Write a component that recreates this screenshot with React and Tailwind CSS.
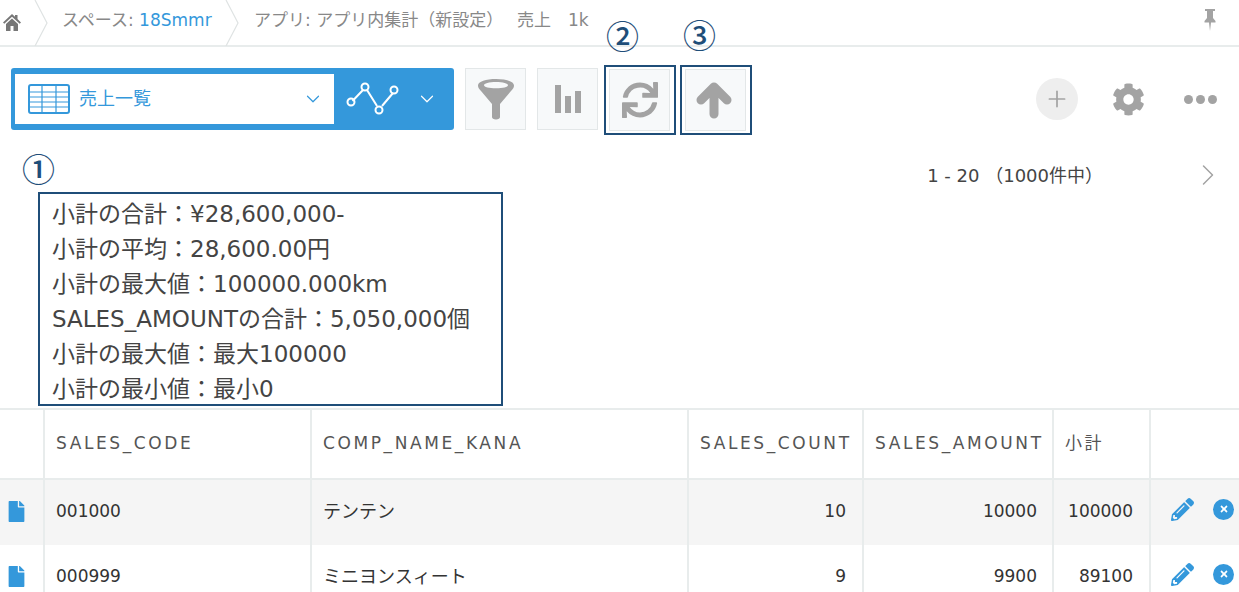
import React from 'react';
import { FaSync, FaCog, FaPencilAlt, FaFile, FaTimes } from 'react-icons/fa';
import { ChevronDown, ChevronRight, Plus } from 'lucide-react';

const SUMMARY_LINES = [
  '小計の合計：¥28,600,000-',
  '小計の平均：28,600.00円',
  '小計の最大値：100000.000km',
  'SALES_AMOUNTの合計：5,050,000個',
  '小計の最大値：最大100000',
  '小計の最小値：最小0',
];

const ROWS = [
  { code: '001000', name: 'テンテン', count: '10', amount: '10000', subtotal: '100000', shaded: true },
  { code: '000999', name: 'ミニヨンスィート', count: '9', amount: '9900', subtotal: '89100', shaded: false },
];

const GRID = 'grid grid-cols-[45px_267px_377px_175px_190px_97px_88px]';
const CELL = 'flex items-center border-r-2 border-[#e8ecec]';

function Crumb() {
  return (
    <svg width="14" height="46" viewBox="0 0 14 46" className="shrink-0 text-[#dfe3e3]" fill="none" stroke="currentColor" strokeWidth="1.2">
      <path d="M1 0 L13 23 L1 46" />
    </svg>
  );
}

function ToolButton({ children, className = '' }) {
  return (
    <div className={`flex h-[62px] w-[61px] items-center justify-center border border-[#e3e7e8] bg-[#f7f9fa] text-[#a3a3a3] ${className}`}>
      {children}
    </div>
  );
}

function Marked({ children, mark, markClass }) {
  return (
    <div className="relative flex h-[70px] w-[72px] items-center border-2 border-[#1f4e79] pl-[3px]">
      {children}
      <span className={`absolute font-['Noto_Sans_CJK_JP',sans-serif] text-[33px] font-medium leading-none text-[#1f4e79] ${markClass}`}>{mark}</span>
    </div>
  );
}

function DataRow({ row }) {
  return (
    <div className={`${GRID} h-[65px] text-[17px] text-[#333] ${row.shaded ? 'bg-[#f5f5f5]' : 'bg-white'}`}>
      <div className={`${CELL} pb-[2px] pl-[6px] text-[#3498db]`}>
        <FaFile size={21} />
      </div>
      <div className={`${CELL} pb-[2px] pl-[11px]`}>{row.code}</div>
      <div className={`${CELL} pb-[2px] pl-[11px] text-[18px]`}>{row.name}</div>
      <div className={`${CELL} justify-end pb-[2px] pr-[16px]`}>{row.count}</div>
      <div className={`${CELL} justify-end pb-[2px] pr-[15px]`}>{row.amount}</div>
      <div className={`${CELL} justify-end pb-[2px] pr-[16px]`}>{row.subtotal}</div>
      <div className="flex items-center gap-[19px] pb-[7px] pl-[20px] text-[#3498db]">
        <FaPencilAlt size={23} />
        <span className="flex h-[21px] w-[21px] items-center justify-center rounded-full bg-[#3498db] text-white">
          <FaTimes size={10} />
        </span>
      </div>
    </div>
  );
}

export default function App() {
  return (
    <div className="h-[592px] w-[1239px] overflow-hidden bg-white font-['DejaVu_Sans','Noto_Sans_CJK_JP',sans-serif] text-[#333]">
      <header className="flex h-[47px] items-center border-b-2 border-[#e8ecec] text-[17px] text-[#888]">
        <svg width="18" height="17" viewBox="0 0 18 17" fill="#777" className="ml-[3px] mr-[13px] mb-[1px] shrink-0">
          <path d="M9 0 L12 2.700 V1 H14.500 V5 L18 8.500 L16.700 9.800 L9 2.800 L1.300 9.800 L0 8.500 Z M3 10 L9 4.500 L15 10 V17 H10.500 V12 H7.500 V17 H3 Z" />
        </svg>
        <Crumb />
        <span className="mb-[4px] ml-[14px] w-[163px] whitespace-nowrap">
          スペース: <span className="text-[#3498db]">18Smmr</span>
        </span>
        <Crumb />
        <span className="mb-[4px] ml-[15px] w-[263px] whitespace-nowrap">アプリ: アプリ内集計（新設定）</span>
        <span className="mb-[4px] w-[51px]">売上</span>
        <span className="mb-[4px]">1k</span>
        <svg width="12" height="22" viewBox="0 0 12 22" fill="#a3a3a3" className="ml-auto mr-[23px] mb-[5px] shrink-0">
          <path d="M1 0 H11 V2 H9 V9 L11.500 12 V13.500 H7 L6 22 L5 13.500 H0.500 V12 L3 9 V2 H1 Z" />
        </svg>
      </header>

      <div className="flex h-[92px] items-start pl-[11px] pr-[22px] pt-[18px]">
        <div className="mt-[3px] flex h-[62px] w-[443px] items-center rounded-[3px] bg-[#3498db] pl-[4px]">
          <div className="flex h-[50px] w-[319px] items-center bg-white pl-[13px] pr-[10px] text-[18px] text-[#3498db]">
            <svg width="42" height="30" viewBox="0 0 42 30" fill="none" stroke="currentColor" className="mr-[9px] shrink-0">
              <rect x="1" y="1" width="40" height="28" rx="2" strokeWidth="2" />
              <path d="M2 8h38M2 13h38M2 18h38M2 23h38M14 2v26M28 2v26" strokeWidth="1.2" />
            </svg>
            <span className="mb-[2px]">売上一覧</span>
            <ChevronDown size={22} strokeWidth={1.3} className="ml-auto" />
          </div>
          <svg width="54" height="36" viewBox="0 0 54 36" fill="none" stroke="white" strokeWidth="2" className="ml-[12px] shrink-0">
            <path d="M6.500 20 L17 9 M21 9 L31 25 M36 25 L47 12" />
            <circle cx="5" cy="21" r="3.500" />
            <circle cx="19" cy="6" r="3.500" />
            <circle cx="33" cy="29" r="3.500" />
            <circle cx="48" cy="9" r="3.500" />
          </svg>
          <ChevronDown size={22} strokeWidth={1.3} className="ml-[16px] text-white" />
        </div>

        <ToolButton className="mt-[3px] ml-[11px]">
          <svg width="38" height="42" viewBox="0 0 38 42" fill="currentColor">
            <path fillRule="evenodd" d="M19 1C9 1 1 3.500 1 7.500c0 2 1 3.500 3 5.500l11 13v13c0 1.500 1.500 2.500 4 2.500s4-1 4-2.500V26l11-13c2-2 3-3.500 3-5.500C37 3.500 29 1 19 1zm0 3c7 0 12 1.500 12 3.200s-5 3-12 3-12-1.300-12-3S12 4 19 4z" />
          </svg>
        </ToolButton>
        <ToolButton className="mt-[3px] ml-[11px]">
          <svg width="26" height="28" viewBox="0 0 26 28" fill="currentColor">
            <rect x="0" y="0" width="6" height="28" />
            <rect x="10" y="11" width="6" height="17" />
            <rect x="20" y="6" width="6" height="22" />
          </svg>
        </ToolButton>

        <div className="ml-[6px]">
          <Marked mark="②" markClass="left-[0px] top-[-48px]">
            <ToolButton>
              <FaSync size={36} />
            </ToolButton>
          </Marked>
        </div>
        <div className="ml-[4px]">
          <Marked mark="③" markClass="left-[1px] top-[-49px]">
            <ToolButton>
              <svg width="38" height="38" viewBox="0 0 38 38" fill="none" stroke="currentColor" strokeLinecap="round" strokeLinejoin="round" strokeWidth="9" className="mr-[2px]">
                <path d="M18 33 V7 M5 19 L18 6 L31 19" />
              </svg>
            </ToolButton>
          </Marked>
        </div>

        <span className="ml-auto mt-[13px] flex h-[42px] w-[42px] items-center justify-center rounded-full bg-[#eeeeee] text-[#a3a3a3]">
          <Plus size={26} strokeWidth={1.6} />
        </span>
        <FaCog size={33} className="ml-[34px] mt-[18px] text-[#a3a3a3]" />
        <div className="ml-[39px] mt-[30px] flex gap-[3px]">
          <span className="h-[9px] w-[9px] rounded-full bg-[#a3a3a3]" />
          <span className="h-[9px] w-[9px] rounded-full bg-[#a3a3a3]" />
          <span className="h-[9px] w-[9px] rounded-full bg-[#a3a3a3]" />
        </div>
      </div>

      <div className="flex h-[269px] items-start justify-between pl-[38px] pr-[13px] pt-[53px]">
        <div className="relative h-[214px] w-[465px] border-2 border-[#1f4e79] pl-[12px] pt-[3px] text-[23px] leading-[35px] text-[#444]">
          <span className="absolute left-[-18px] top-[-42px] font-['Noto_Sans_CJK_JP',sans-serif] text-[33px] font-medium leading-none text-[#1f4e79]">①</span>
          {SUMMARY_LINES.map((line) => (
            <div key={line} className="whitespace-nowrap">{line}</div>
          ))}
        </div>
        <div className="mt-[-35px] flex items-center text-[18px] text-[#444]">
          <span className="whitespace-nowrap">1 - 20 （1000件中）</span>
          <ChevronRight size={36} strokeWidth={1} className="ml-[87px] text-[#a3a3a3]" />
        </div>
      </div>

      <div className="border-t-2 border-[#e8ecec]">
        <div className={`${GRID} h-[70px] border-b-2 border-[#e8ecec] text-[17px] tracking-[2.600px] text-[#555]`}>
          <div className="border-r-2 border-[#e8ecec]" />
          <div className={`${CELL} pl-[11px]`}>SALES_CODE</div>
          <div className={`${CELL} pl-[11px]`}>COMP_NAME_KANA</div>
          <div className={`${CELL} pl-[11px]`}>SALES_COUNT</div>
          <div className={`${CELL} pl-[11px]`}>SALES_AMOUNT</div>
          <div className={`${CELL} pl-[11px]`}>小計</div>
          <div />
        </div>
        {ROWS.map((row) => (
          <DataRow key={row.code} row={row} />
        ))}
      </div>
    </div>
  );
}
